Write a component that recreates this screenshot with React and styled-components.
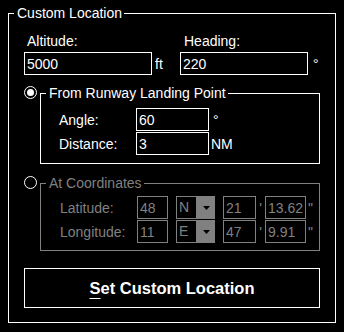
import React from "react";
import styled, { createGlobalStyle } from "styled-components";

const WHITE = "#ffffff";
const GRAY = "#808080";

const GlobalStyle = createGlobalStyle`
  html, body {
    margin: 0;
    padding: 0;
    background: #000;
  }
  body {
    width: 344px;
    height: 332px;
    overflow: hidden;
    font-family: "Liberation Sans", Arial, sans-serif;
    font-size: 14px;
    line-height: 16px;
    color: ${WHITE};
  }
`;

function App() {
  return (
    <>
      <GlobalStyle />
      <Window>
        <Group>
          <Title>Custom Location</Title>
          <Body>
            <TopRow>
              <Field>
                <Label $indent={3}>Altitude:</Label>
                <InputRow>
                  <TextBox $w={128} defaultValue="5000" readOnly />
                  <Unit $gap={3}>ft</Unit>
                </InputRow>
              </Field>
              <Field>
                <Label $indent={4}>Heading:</Label>
                <InputRow>
                  <TextBox $w={128} defaultValue="220" readOnly />
                  <Unit $gap={5}>°</Unit>
                </InputRow>
              </Field>
            </TopRow>

            <RadioRow $top={10}>
              <Radio type="radio" name="mode" defaultChecked />
              <Group $inner>
                <Title>From Runway Landing Point</Title>
                <FormGrid $pad="7px 0 8px 18px">
                  <Label>Angle:</Label>
                  <InputRow>
                    <TextBox $w={73} defaultValue="60" readOnly />
                    <Unit $gap={4}>°</Unit>
                  </InputRow>
                  <Label>Distance:</Label>
                  <InputRow>
                    <TextBox $w={73} defaultValue="3" readOnly />
                    <Unit $gap={2}>NM</Unit>
                  </InputRow>
                </FormGrid>
              </Group>
            </RadioRow>

            <RadioRow $top={11}>
              <Radio type="radio" name="mode" />
              <Group $inner $disabled>
                <Title>At Coordinates</Title>
                <FormGrid $pad="5px 0 7px 19px">
                  <Label>Latitude:</Label>
                  <InputRow>
                    <TextBox $w={31} $disabled defaultValue="48" disabled />
                    <Combo value="N" />
                    <TextBox $w={33} $disabled defaultValue="21" disabled />
                    <Tick>'</Tick>
                    <TextBox $w={41} $disabled defaultValue="13.62" disabled />
                    <Tick>"</Tick>
                  </InputRow>
                  <Label>Longitude:</Label>
                  <InputRow>
                    <TextBox $w={31} $disabled defaultValue="11" disabled />
                    <Combo value="E" />
                    <TextBox $w={33} $disabled defaultValue="47" disabled />
                    <Tick>'</Tick>
                    <TextBox $w={41} $disabled defaultValue="9.91" disabled />
                    <Tick>"</Tick>
                  </InputRow>
                </FormGrid>
              </Group>
            </RadioRow>

            <ActionButton>
              <u>S</u>et Custom Location
            </ActionButton>
          </Body>
        </Group>
      </Window>
    </>
  );
}

function Combo({ value }) {
  return (
    <ComboBox>
      <ComboText>{value}</ComboText>
      <ComboButton>
        <svg width="7" height="4" viewBox="0 0 7 4">
          <polygon points="0,0 7,0 3.5,4" fill="#000" />
        </svg>
      </ComboButton>
    </ComboBox>
  );
}

const Window = styled.div`
  width: 344px;
  height: 332px;
  box-sizing: border-box;
  padding: 5px 8px 0 8px;
  background: #000;
`;

const Group = styled.fieldset`
  margin: 0;
  padding: 0;
  min-width: 0;
  flex: ${(props) => (props.$inner ? "1" : "none")};
  border: 1px solid ${(props) => (props.$disabled ? GRAY : WHITE)};
  color: ${(props) => (props.$disabled ? GRAY : WHITE)};
`;

const Title = styled.legend`
  margin-left: 5px;
  padding: 0 2px 0 3px;
  font-size: 14px;
  line-height: 16px;
`;

const Body = styled.div`
  display: flex;
  flex-direction: column;
  padding: 12px 15px 14px 15px;
`;

const TopRow = styled.div`
  display: grid;
  grid-template-columns: 156px 1fr;
`;

const Field = styled.div`
  display: flex;
  flex-direction: column;
  gap: 3px;
`;

const Label = styled.span`
  padding-left: ${(props) => props.$indent || 0}px;
  line-height: 16px;
  white-space: nowrap;
`;

const InputRow = styled.div`
  display: flex;
  align-items: center;
`;

const TextBox = styled.input`
  box-sizing: border-box;
  width: ${(props) => props.$w}px;
  height: 23px;
  margin: 0;
  padding: 0 2px;
  border: 1px solid ${(props) => (props.$disabled ? GRAY : WHITE)};
  border-radius: 0;
  background: #000;
  color: ${(props) => (props.$disabled ? GRAY : WHITE)};
  -webkit-text-fill-color: ${(props) => (props.$disabled ? GRAY : WHITE)};
  opacity: 1;
  font-family: "Liberation Sans", Arial, sans-serif;
  font-size: 14px;
  outline: none;
`;

const Unit = styled.span`
  margin-left: ${(props) => props.$gap}px;
  line-height: 16px;
`;

const Tick = styled.span`
  width: 9px;
  text-align: center;
  color: ${GRAY};
`;

const RadioRow = styled.div`
  display: flex;
  align-items: flex-start;
  margin-top: ${(props) => props.$top}px;
`;

const Radio = styled.input`
  appearance: none;
  box-sizing: border-box;
  width: 13px;
  height: 13px;
  margin: 1px 3px 0 0;
  border: 1px solid ${WHITE};
  border-radius: 50%;
  background: #000;
  display: grid;
  place-content: center;
  flex: none;

  &::before {
    content: "";
    width: 7px;
    height: 7px;
    border-radius: 50%;
    background: ${WHITE};
    transform: scale(0);
  }
  &:checked::before {
    transform: scale(1);
  }
`;

const FormGrid = styled.div`
  display: grid;
  grid-template-columns: 77px auto;
  row-gap: 1px;
  align-items: center;
  padding: ${(props) => props.$pad};
`;

const ComboBox = styled.div`
  display: flex;
  height: 23px;
  margin: 0 8px;
`;

const ComboText = styled.span`
  box-sizing: border-box;
  width: 21px;
  height: 23px;
  border: 1px solid ${GRAY};
  padding: 2px 0 0 2px;
  color: ${GRAY};
`;

const ComboButton = styled.span`
  width: 18px;
  height: 23px;
  background: ${GRAY};
  display: flex;
  align-items: center;
  justify-content: center;
`;

const ActionButton = styled.button`
  box-sizing: border-box;
  width: 100%;
  height: 40px;
  margin-top: 17px;
  border: 1px solid ${WHITE};
  border-radius: 0;
  background: #000;
  color: ${WHITE};
  font-family: "Liberation Sans", Arial, sans-serif;
  font-size: 16.5px;
  font-weight: bold;
  cursor: pointer;

  u {
    text-underline-offset: 4px;
  }
`;

export default App;
